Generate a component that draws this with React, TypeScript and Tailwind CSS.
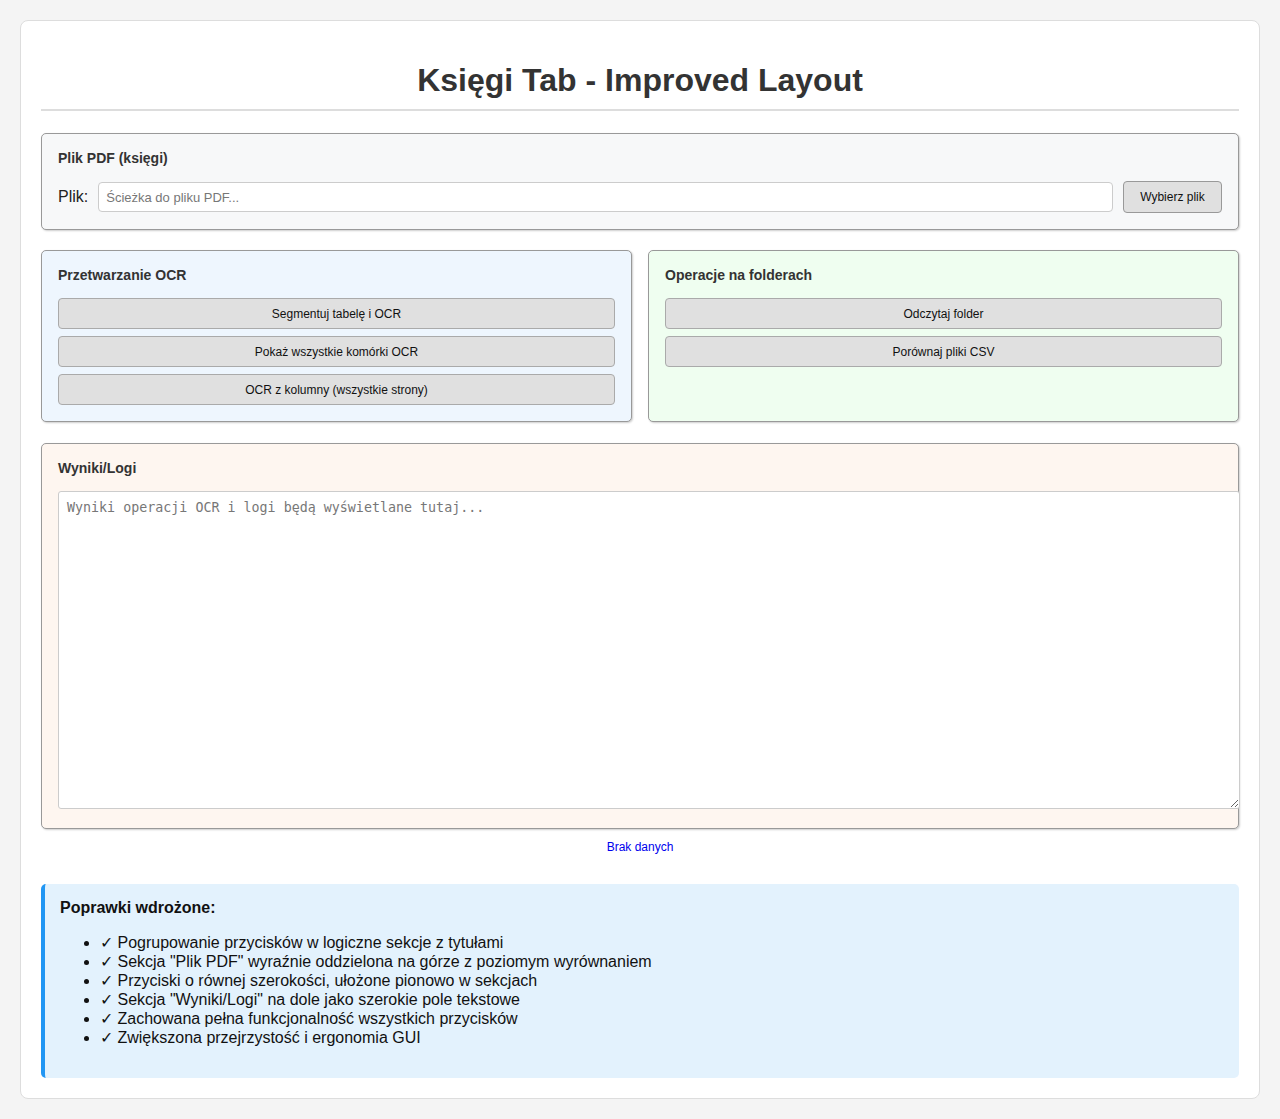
import React from 'react'

const SANS = "font-['Liberation_Sans',Arial,sans-serif]"

const sectionBox =
  'rounded-[5px] border border-[#999] shadow-[1px_1px_2px_rgba(0,0,0,0.2)] p-4'

const groupBtn =
  'block w-full h-[31px] rounded-[4px] border border-[#aaa] bg-[#e0e0e0] text-[12px] text-[#111]'

const improvements = [
  'Pogrupowanie przycisków w logiczne sekcje z tytułami',
  'Sekcja "Plik PDF" wyraźnie oddzielona na górze z poziomym wyrównaniem',
  'Przyciski o równej szerokości, ułożone pionowo w sekcjach',
  'Sekcja "Wyniki/Logi" na dole jako szerokie pole tekstowe',
  'Zachowana pełna funkcjonalność wszystkich przycisków',
  'Zwiększona przejrzystość i ergonomia GUI',
]

export default function App() {
  return (
    <div className={`min-h-screen bg-[#f4f4f4] p-5 ${SANS}`}>
      <div className="rounded-lg border border-[#ddd] bg-white p-5">
        {/* Header */}
        <h1 className="mt-[21px] mb-[22px] border-b-2 border-[#ddd] pb-[10px] text-center text-[32px] font-bold leading-[37px] text-[#333]">
          Księgi Tab - Improved Layout
        </h1>

        {/* Plik PDF */}
        <div className={`${sectionBox} bg-[#f7f8f9]`}>
          <h3 className="mb-[15px] text-[14px] font-bold leading-4 text-[#333]">
            Plik PDF (księgi)
          </h3>
          <div className="flex h-[32px] items-center">
            <span className="mr-[10px] text-[16px] text-[#222]">Plik:</span>
            <input
              type="text"
              placeholder="Ścieżka do pliku PDF..."
              className="h-[30px] flex-1 rounded-[4px] border border-[#ccc] bg-white px-[7px] text-[13px] text-[#222] placeholder:text-[#777] outline-none"
            />
            <button className="ml-[10px] h-[32px] w-[99px] rounded-[4px] border border-[#999] bg-[#e0e0e0] text-[12px] text-[#111]">
              Wybierz plik
            </button>
          </div>
        </div>

        {/* Groups */}
        <div className="mt-5 grid grid-cols-2 gap-4">
          <div className={`${sectionBox} bg-[#eef6fe]`}>
            <h3 className="mb-[15px] text-[14px] font-bold leading-4 text-[#333]">
              Przetwarzanie OCR
            </h3>
            <div className="flex flex-col gap-[7px]">
              <button className={groupBtn}>Segmentuj tabelę i OCR</button>
              <button className={groupBtn}>Pokaż wszystkie komórki OCR</button>
              <button className={groupBtn}>OCR z kolumny (wszystkie strony)</button>
            </div>
          </div>
          <div className={`${sectionBox} bg-[#effef0]`}>
            <h3 className="mb-[15px] text-[14px] font-bold leading-4 text-[#333]">
              Operacje na folderach
            </h3>
            <div className="flex flex-col gap-[7px]">
              <button className={groupBtn}>Odczytaj folder</button>
              <button className={groupBtn}>Porównaj pliki CSV</button>
            </div>
          </div>
        </div>

        {/* Wyniki */}
        <div className={`${sectionBox} mt-[21px] bg-[#fef6f0] pb-[19px]`}>
          <h3 className="mb-[15px] text-[14px] font-bold leading-4 text-[#333]">Wyniki/Logi</h3>
          <textarea
            placeholder="Wyniki operacji OCR i logi będą wyświetlane tutaj..."
            className="box-content block h-[300px] w-full rounded-[3px] border border-[#ccc] bg-white p-2 font-['DejaVu_Sans_Mono',monospace] text-[13.33px] leading-[16px] text-[#222] placeholder:text-[#777] outline-none"
          />
        </div>

        <p className="mt-[11px] text-center text-[12px] leading-[14px] text-[#0000ee]">
          Brak danych
        </p>

        {/* Info */}
        <div className="mt-[30px] rounded-[5px] border-l-4 border-[#2196f3] bg-[#e3f2fd] p-[15px]">
          <h4 className="text-[16px] font-bold leading-[18px] text-[#111]">Poprawki wdrożone:</h4>
          <ul className="my-4 list-disc pl-10 text-[16px] leading-[19px] text-[#111]">
            {improvements.map((t) => (
              <li key={t}>✓ {t}</li>
            ))}
          </ul>
        </div>
      </div>
    </div>
  )
}
